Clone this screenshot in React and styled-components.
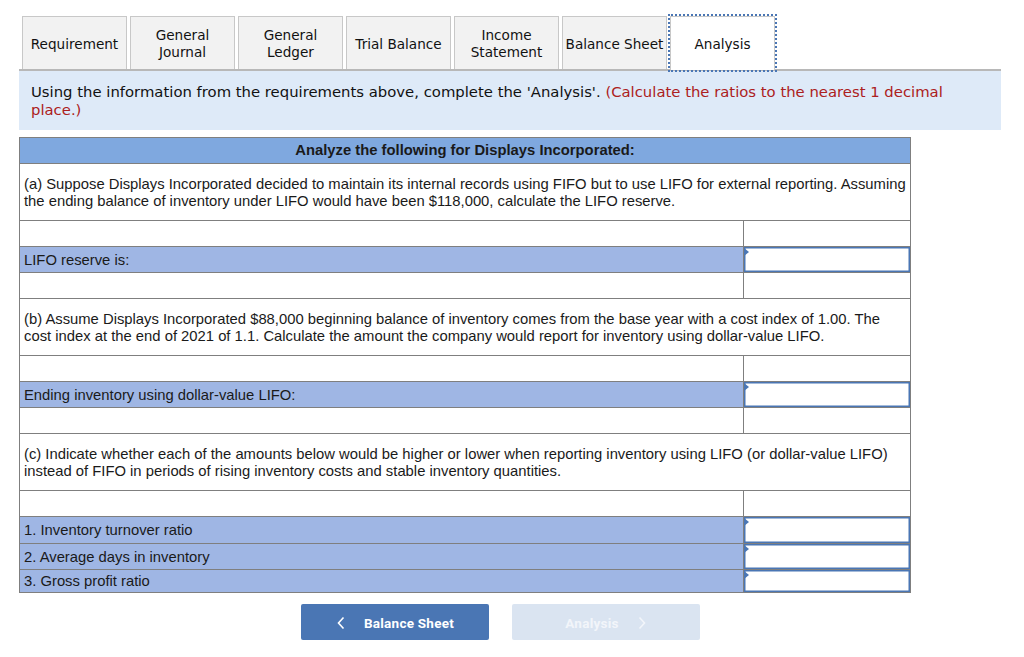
import styled, { createGlobalStyle } from 'styled-components';

const GlobalStyle = createGlobalStyle`
	html, body {
		margin: 0;
		padding: 0;
		background: #fff;
	}
`;

const tabs = [
	{ label: 'Requirement' },
	{ label: 'General Journal', narrow: true },
	{ label: 'General Ledger', narrow: true },
	{ label: 'Trial Balance' },
	{ label: 'Income Statement', narrow: true },
	{ label: 'Balance Sheet' },
	{ label: 'Analysis', active: true },
];

const InputRow = ({ label, height }) => (
	<tr>
		<LabelCell $height={height}>{label}</LabelCell>
		<InputCell>
			<Marker />
		</InputCell>
	</tr>
);

const BlankRow = () => (
	<tr>
		<BlankCell />
		<BlankCell />
	</tr>
);

const TextRow = ({ children }) => (
	<tr>
		<TextCell colSpan={2}>{children}</TextCell>
	</tr>
);

const App = () => {
	return (
		<Page>
			<GlobalStyle />
			<TabBar>
				{tabs.map(tab => (
					<Tab key={tab.label} $active={tab.active} $narrow={tab.narrow}>
						{tab.label}
					</Tab>
				))}
			</TabBar>
			<Banner>
				Using the information from the requirements above, complete the 'Analysis'.{' '}
				<Red>(Calculate the ratios to the nearest 1 decimal place.)</Red>
			</Banner>
			<Sheet>
				<colgroup>
					<col width='724' />
					<col width='167' />
				</colgroup>
				<tbody>
					<tr>
						<HeaderCell colSpan={2}>Analyze the following for Displays Incorporated:</HeaderCell>
					</tr>
					<TextRow>
						(a) Suppose Displays Incorporated decided to maintain its internal records using FIFO but to use LIFO for
						external reporting. Assuming the ending balance of inventory under LIFO would have been $118,000, calculate
						the LIFO reserve.
					</TextRow>
					<BlankRow />
					<InputRow label='LIFO reserve is:' height={26} />
					<BlankRow />
					<TextRow>
						(b) Assume Displays Incorporated $88,000 beginning balance of inventory comes from the base year with a cost
						index of 1.00. The cost index at the end of 2021 of 1.1. Calculate the amount the company would report for
						inventory using dollar-value LIFO.
					</TextRow>
					<BlankRow />
					<InputRow label='Ending inventory using dollar-value LIFO:' height={26} />
					<BlankRow />
					<TextRow>
						(c) Indicate whether each of the amounts below would be higher or lower when reporting inventory using LIFO
						(or dollar-value LIFO) instead of FIFO in periods of rising inventory costs and stable inventory quantities.
					</TextRow>
					<BlankRow />
					<InputRow label='1. Inventory turnover ratio' height={27} />
					<InputRow label='2. Average days in inventory' height={26} />
					<InputRow label='3. Gross profit ratio' height={23} />
				</tbody>
			</Sheet>
			<Footer>
				<NavButton>
					<svg width='10' height='14' viewBox='0 0 10 14' fill='none' stroke='currentColor' strokeWidth='1.6'>
						<path d='M7.5 1.5 L2.5 7 L7.5 12.5' />
					</svg>
					Balance Sheet
				</NavButton>
				<NavButton $disabled>
					Analysis
					<svg width='10' height='14' viewBox='0 0 10 14' fill='none' stroke='currentColor' strokeWidth='1.6'>
						<path d='M2.5 1.5 L7.5 7 L2.5 12.5' />
					</svg>
				</NavButton>
			</Footer>
		</Page>
	);
};

export default App;

const Page = styled.div`
	box-sizing: border-box;
	width: 1024px;
	height: 657px;
	padding: 16px 23px 0 19px;
	overflow: hidden;
`;
const TabBar = styled.div`
	display: flex;
	gap: 3px;
	padding-left: 3px;
	height: 53px;
	border-bottom: 2px solid #b8b8b8;
`;
const Tab = styled.div`
	box-sizing: border-box;
	display: flex;
	align-items: center;
	justify-content: center;
	flex: none;
	width: 105px;
	height: ${({ $active }) => ($active ? '54px' : '53px')};
	padding: 2px ${({ $narrow }) => ($narrow ? '22px' : '0')} 0;
	position: relative;
	z-index: ${({ $active }) => ($active ? '1' : '0')};
	text-align: center;
	font-family: 'DejaVu Sans', sans-serif;
	font-size: 13.6px;
	line-height: 17px;
	color: #111;
	background: ${({ $active }) => ($active ? '#fff' : '#f2f2f2')};
	border: 1px solid #c8c8c8;
	border-bottom: none;
	outline: ${({ $active }) => ($active ? '2px dotted #4a76b4' : 'none')};
`;
const Banner = styled.div`
	box-sizing: border-box;
	height: 59px;
	padding: 12px 12px 0;
	background: #deeaf8;
	font-family: 'DejaVu Sans', sans-serif;
	font-size: 14.84px;
	line-height: 18px;
	color: #111;
`;
const Red = styled.span`
	color: #ac2020;
`;
const Sheet = styled.table`
	width: 891px;
	margin-top: 7px;
	border-collapse: collapse;
	table-layout: fixed;
	font-family: 'Liberation Sans', Arial, sans-serif;
	font-size: 14.8px;
	line-height: 17px;
	color: #1a1a1a;

	td {
		box-sizing: border-box;
		border: 1px solid #7f7f7f;
	}
`;
const HeaderCell = styled.td`
	height: 26px;
	padding: 0;
	text-align: center;
	font-weight: 700;
	background: #7fa8df;
`;
const TextCell = styled.td`
	height: 57px;
	padding: 7px 4px 5px;
	vertical-align: middle;
	background: #fff;
`;
const BlankCell = styled.td`
	height: 26px;
	padding: 0;
	background: #fff;
`;
const LabelCell = styled.td`
	height: ${({ $height }) => $height}px;
	padding: 1px 4px 0;
	background: #9fb6e4;
`;
const InputCell = styled.td`
	position: relative;
	padding: 0;
	background: #fff;
	box-shadow: inset 0 0 0 1.5px #4a76b4;
`;
const Marker = styled.span`
	position: absolute;
	top: 1px;
	left: 0;
	width: 0;
	height: 0;
	border-top: 4px solid transparent;
	border-bottom: 4px solid transparent;
	border-left: 5px solid #4a76b4;
`;
const Footer = styled.div`
	display: flex;
	gap: 23px;
	margin-top: 11px;
	padding-left: 282px;
`;
const NavButton = styled.div`
	box-sizing: border-box;
	display: flex;
	align-items: center;
	justify-content: center;
	gap: 18px;
	width: 188px;
	height: 36px;
	padding-top: 1px;
	border-radius: 2px;
	font-family: Roboto, sans-serif;
	font-size: 13.5px;
	font-weight: 700;
	letter-spacing: 0.25px;
	color: ${({ $disabled }) => ($disabled ? '#f2f5fa' : '#fff')};
	background: ${({ $disabled }) => ($disabled ? '#dae4f1' : '#4a76b4')};
`;
